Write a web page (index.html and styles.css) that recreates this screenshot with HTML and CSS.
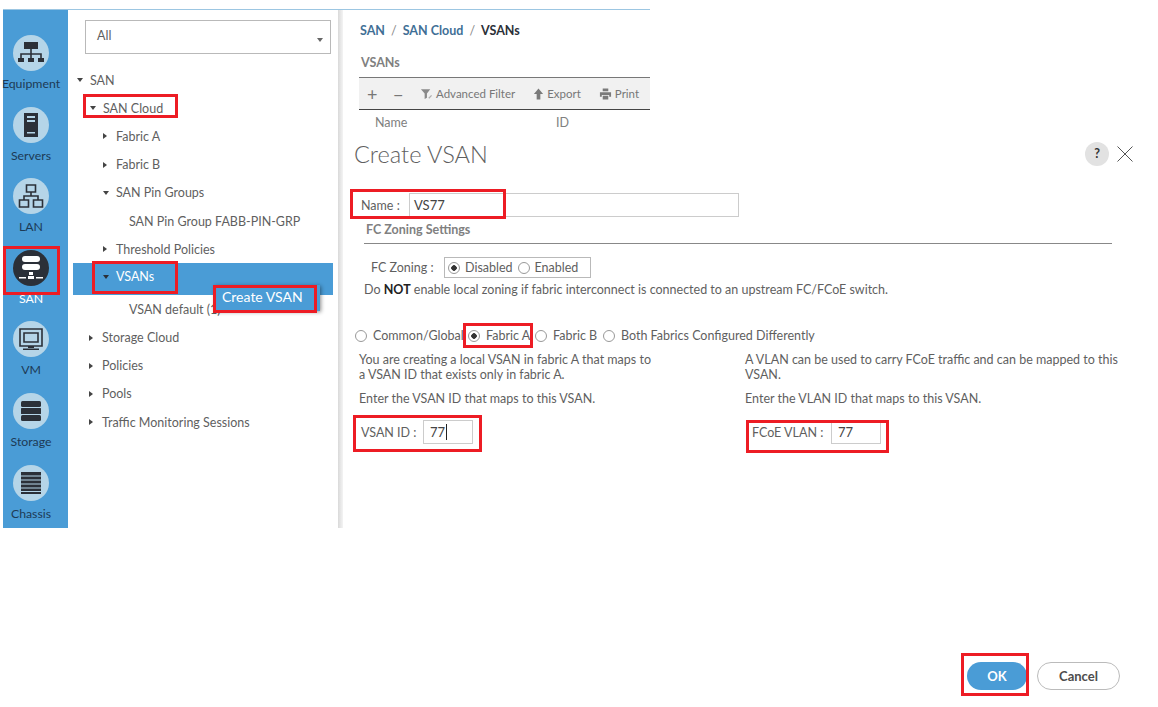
FILE: index.html
```html
<!DOCTYPE html>
<html lang="en">
<head>
    <meta charset="UTF-8">
    <title>Create VSAN</title>
    <link rel="stylesheet" href="styles.css">
</head>
<body>
<div class="page">
    <div class="topline"></div>
    <div class="app">

        <!-- Left icon nav -->
        <nav class="sidebar">
            <div class="nav-item">
                <div class="nav-icon">
                    <svg viewBox="0 0 36 36" width="36" height="36"><path d="M11 7h14v7H11z" fill="#2b3038"/><path d="M18 14v5M8 23v-4h20v4M18 19v4" stroke="#2b3038" stroke-width="1.6" fill="none"/><path d="M5 23h6v4H5zM15 23h6v4h-6zM25 23h6v4h-6z" fill="#2b3038"/></svg>
                </div>
                <span>Equipment</span>
            </div>
            <div class="nav-item">
                <div class="nav-icon">
                    <svg viewBox="0 0 36 36" width="36" height="36"><path d="M11 6h14v24H11z" fill="#2b3038"/><path d="M14 9h8v2h-8zM14 13h8v2h-8zM14 25h8v1.5h-8z" fill="#b5d5e8"/></svg>
                </div>
                <span>Servers</span>
            </div>
            <div class="nav-item">
                <div class="nav-icon">
                    <svg viewBox="0 0 36 36" width="36" height="36"><g fill="none" stroke="#2b3038" stroke-width="1.6"><path d="M13.5 7h9v7h-9zM6.500 22h9v7h-9zM20.500 22h9v7h-9z"/><path d="M18 14v4M11 22v-4h14v4"/></g></svg>
                </div>
                <span>LAN</span>
            </div>
            <div class="nav-item is-active">
                <div class="nav-icon">
                    <svg viewBox="0 0 36 36" width="36" height="36"><g fill="#fff"><rect x="9" y="6" width="18" height="6" rx="3"/><rect x="9" y="14" width="18" height="6" rx="3"/><path d="M16 22h4v3h-4zM15 26h6v3h-6zM6 27h7v1.500H6zM23 27h7v1.500h-7z"/></g></svg>
                </div>
                <span>SAN</span>
            </div>
            <div class="nav-item">
                <div class="nav-icon">
                    <svg viewBox="0 0 36 36" width="36" height="36"><path d="M7 8h22v17H7z" fill="none" stroke="#2b3038" stroke-width="1.600"/><path d="M11 12h14v9H11z" fill="none" stroke="#2b3038" stroke-width="1.600"/><path d="M15 25h6v2h-6zM10 27.500h16v1.500H10z" fill="#2b3038"/></svg>
                </div>
                <span>VM</span>
            </div>
            <div class="nav-item">
                <div class="nav-icon">
                    <svg viewBox="0 0 36 36" width="36" height="36"><g fill="#2b3038"><rect x="8" y="8" width="20" height="6" rx="1.500"/><rect x="8" y="15" width="20" height="6" rx="0.500"/><rect x="8" y="22" width="20" height="6" rx="1.500"/></g></svg>
                </div>
                <span>Storage</span>
            </div>
            <div class="nav-item">
                <div class="nav-icon">
                    <svg viewBox="0 0 36 36" width="36" height="36"><path d="M8 7h20v22H8z" fill="#2b3038"/><path d="M8 11h20M8 15h20M8 19h20M8 23h20M8 26.500h20" stroke="#b5d5e8" stroke-width="1"/></svg>
                </div>
                <span>Chassis</span>
            </div>
        </nav>

        <!-- Tree panel -->
        <section class="tree-panel">
            <div class="filter-select">
                <span>All</span>
                <i class="caret"></i>
            </div>
            <ul class="tree">
                <li class="row depth-0"><i class="arrow-down"></i>SAN</li>
                <li class="row depth-1"><i class="arrow-down"></i>SAN Cloud</li>
                <li class="row depth-2"><i class="arrow-right"></i>Fabric A</li>
                <li class="row depth-2"><i class="arrow-right"></i>Fabric B</li>
                <li class="row depth-2"><i class="arrow-down"></i>SAN Pin Groups</li>
                <li class="row depth-3">SAN Pin Group FABB-PIN-GRP</li>
                <li class="row depth-2"><i class="arrow-right"></i>Threshold Policies</li>
                <li class="row depth-2 selected"><i class="arrow-down"></i>VSANs</li>
                <li class="row depth-3">VSAN default (1)</li>
                <li class="row depth-top"><i class="arrow-right"></i>Storage Cloud</li>
                <li class="row depth-top"><i class="arrow-right"></i>Policies</li>
                <li class="row depth-top"><i class="arrow-right"></i>Pools</li>
                <li class="row depth-top"><i class="arrow-right"></i>Traffic Monitoring Sessions</li>
            </ul>
        </section>

        <div class="shade"></div>

        <main class="main">
            <!-- Page behind the dialog -->
            <div class="behind">
                <div class="breadcrumb">
                    <span>SAN</span><b>/</b><span>SAN Cloud</span><b>/</b><strong>VSANs</strong>
                </div>
                <h3 class="behind-title">VSANs</h3>
                <div class="toolbar">
                    <span class="tool-sign">+</span>
                    <span class="tool-sign minus">&minus;</span>
                    <span class="tool">
                        <svg viewBox="0 0 14 14" width="13" height="14"><path d="M1 2h10L7.500 6.500V11L5 12.500v-6z" fill="#8a8a8a"/><path d="M9 11l3-3 1 1-3 3z" fill="#b0b0b0"/></svg>
                        Advanced Filter
                    </span>
                    <span class="tool">
                        <svg viewBox="0 0 12 14" width="11" height="14"><path d="M6 1l5 6H8v6H4V7H1z" fill="#7a7a7a"/></svg>
                        Export
                    </span>
                    <span class="tool">
                        <svg viewBox="0 0 14 14" width="13" height="14"><path d="M4 1h6v3H4zM1 5h12v5h-2V8H3v2H1zM4 9h6v4H4z" fill="#7a7a7a"/></svg>
                        Print
                    </span>
                </div>
                <div class="table-head">
                    <span class="col-name">Name</span>
                    <span>ID</span>
                </div>
            </div>

            <!-- Create VSAN dialog -->
            <div class="dialog">
                <div class="dialog-head">
                    <h1>Create VSAN</h1>
                    <div class="dialog-actions">
                        <span class="help">?</span>
                        <svg viewBox="0 0 16 16" width="16" height="16"><path d="M0.500 0.500l15 15M15.500 0.500l-15 15" stroke="#555" stroke-width="1" fill="none"/></svg>
                    </div>
                </div>

                <div class="name-row">
                    <label>Name :</label>
                    <div class="text-input name-input">VS77</div>
                </div>

                <div class="settings">
                    <h3>FC Zoning Settings</h3>
                    <div class="zoning-row">
                        <label>FC Zoning :</label>
                        <div class="radio-box">
                            <span class="radio on"></span>Disabled
                            <span class="radio"></span>Enabled
                        </div>
                    </div>
                    <p class="note">Do <strong>NOT</strong> enable local zoning if fabric interconnect is connected to an upstream FC/FCoE switch.</p>
                </div>

                <div class="radio-row">
                    <span class="radio-opt"><span class="radio"></span>Common/Global</span>
                    <span class="radio-opt"><span class="radio on"></span>Fabric A</span>
                    <span class="radio-opt"><span class="radio"></span>Fabric B</span>
                    <span class="radio-opt"><span class="radio"></span>Both Fabrics Configured Differently</span>
                </div>

                <div class="columns">
                    <div class="column">
                        <p class="lead">You are creating a local VSAN in fabric A that maps to<br>a VSAN ID that exists only in fabric A.</p>
                        <p class="enter">Enter the VSAN ID that maps to this VSAN.</p>
                        <div class="id-row">
                            <label>VSAN ID :</label>
                            <div class="text-input id-input">77<i class="cursor"></i></div>
                        </div>
                    </div>
                    <div class="column right">
                        <p class="lead">A VLAN can be used to carry FCoE traffic and can be mapped to this VSAN.</p>
                        <p class="enter">Enter the VLAN ID that maps to this VSAN.</p>
                        <div class="id-row">
                            <label>FCoE VLAN :</label>
                            <div class="text-input id-input">77</div>
                        </div>
                    </div>
                </div>

                <div class="dialog-foot">
                    <button class="btn btn-ok">OK</button>
                    <button class="btn btn-cancel">Cancel</button>
                </div>
            </div>
        </main>
    </div>

    <!-- Context menu over the tree -->
    <div class="context-menu">Create VSAN</div>

    <!-- Red annotation boxes drawn over the screenshot -->
    <div class="mark mark-cloud"></div>
    <div class="mark mark-san"></div>
    <div class="mark mark-vsans"></div>
    <div class="mark mark-create"></div>
    <div class="mark mark-name"></div>
    <div class="mark mark-fabric"></div>
    <div class="mark mark-id"></div>
    <div class="mark mark-fcoe"></div>
    <div class="mark mark-ok"></div>
</div>
</body>
</html>
```

FILE: styles.css
```css
* {
    box-sizing: border-box;
}

body {
    margin: 0;
    background: #fff;
    color: #5f5f5f;
    font-family: Lato, 'Liberation Sans', sans-serif;
    font-size: 12.5px;
}

h1, h3, p, ul {
    margin: 0;
    padding: 0;
}

.page {
    position: relative;
    width: 1158px;
    height: 707px;
    overflow: hidden;
}

.topline {
    width: 647px;
    height: 1px;
    margin: 9px 0 0 3px;
    background: #9cc6e2;
}

.app {
    display: flex;
    align-items: flex-start;
    margin-left: 3px;
    height: 697px;
}

/* Sidebar */
.sidebar {
    flex: none;
    width: 65px;
    height: 518px;
    padding: 25px 9px 0 0;
    background: #4a9cd6;
}

.nav-item {
    display: flex;
    flex-direction: column;
    align-items: center;
    height: 71.6px;
    color: #1d3a55;
}

.nav-item span {
    margin-top: 4px;
    font-size: 12.3px;
    line-height: 17px;
    white-space: nowrap;
}

.nav-icon {
    flex: none;
    width: 36px;
    height: 36px;
    border-radius: 50%;
    background: #b5d5e8;
}

.nav-item.is-active {
    color: #fff;
}

.nav-item.is-active .nav-icon {
    background: #2b3038;
}

/* Tree */
.tree-panel {
    flex: none;
    width: 270px;
    height: 518px;
    padding: 10px 0 0 5px;
}

.filter-select {
    position: relative;
    width: 246px;
    height: 34px;
    margin-left: 12px;
    padding: 7px 11px;
    border: 1px solid #b9b9b9;
    line-height: 16px;
}

.caret {
    position: absolute;
    right: 7px;
    top: 17px;
    border-left: 3.500px solid transparent;
    border-right: 3.500px solid transparent;
    border-top: 4px solid #666;
}

.tree {
    list-style: none;
    width: 260px;
    margin-top: 12px;
}

.row {
    display: flex;
    align-items: center;
    height: 28.2px;
    white-space: nowrap;
}

.depth-0 { padding-left: 4px; }
.depth-top { padding-left: 16px; }
.depth-1 { padding-left: 17px; }
.depth-2 { padding-left: 30px; }
.depth-3 { padding-left: 56px; }

.row i {
    flex: none;
    width: 13px;
}

.arrow-down::before {
    content: "";
    display: block;
    width: 0;
    border-left: 3.500px solid transparent;
    border-right: 3.500px solid transparent;
    border-top: 4px solid #444;
}

.arrow-right::before {
    content: "";
    display: block;
    width: 0;
    border-top: 3.500px solid transparent;
    border-bottom: 3.500px solid transparent;
    border-left: 4px solid #444;
}

.row.selected {
    align-items: flex-start;
    height: 32px;
    padding-top: 1px;
    background: #4a9cd6;
    color: #fff;
    line-height: 26px;
}

.row.selected i {
    padding-top: 11px;
}

.row.selected .arrow-down::before {
    border-top-color: #2b3038;
}

.shade {
    flex: none;
    width: 5px;
    height: 518px;
    background: linear-gradient(90deg, #d9d9d9, #f4f4f4);
}

/* Main area */
.main {
    flex: 1;
    min-width: 0;
}

.behind {
    width: 307px;
    height: 124px;
    padding: 13px 0 0 16px;
}

.breadcrumb {
    display: flex;
    gap: 6px;
    padding-left: 1px;
    line-height: 16px;
    font-weight: 700;
    color: #3f6f96;
}

.breadcrumb b {
    font-weight: 400;
    color: #888;
}

.breadcrumb strong {
    color: #2b3038;
    font-weight: 700;
}

.behind-title {
    margin-top: 16px;
    padding-left: 2px;
    line-height: 16px;
    font-size: 12.5px;
    font-weight: 700;
    color: #808080;
}

.toolbar {
    display: flex;
    align-items: center;
    height: 33px;
    margin-top: 6px;
    padding-left: 8px;
    border-top: 1px solid #777;
    border-bottom: 1px solid #444;
    background: #f1f1f1;
    color: #777;
    font-size: 11.5px;
    white-space: nowrap;
}

.tool-sign {
    flex: none;
    width: 26px;
    font-size: 18px;
    line-height: 20px;
}

.tool-sign.minus {
    width: 27px;
}

.tool {
    flex: none;
    display: flex;
    align-items: center;
    gap: 3px;
    margin-right: 18px;
}

.tool:last-child {
    margin-right: 0;
}

.table-head {
    display: flex;
    padding: 5px 0 0 16px;
    color: #808080;
    line-height: 16px;
}

.col-name {
    width: 181px;
}

/* Dialog */
.dialog {
    height: 563px;
    padding-left: 11px;
    background: #fff;
}

.dialog-head {
    display: flex;
    align-items: center;
    justify-content: space-between;
    width: 779px;
    height: 40px;
}

.dialog-head h1 {
    font-size: 23.6px;
    font-weight: 300;
    color: #5f5f5f;
}

.dialog-actions {
    display: flex;
    align-items: center;
    gap: 8px;
}

.help {
    width: 24px;
    height: 24px;
    border-radius: 50%;
    background: #e2e2e2;
    color: #333;
    font-weight: 700;
    line-height: 24px;
    text-align: center;
}

.name-row {
    display: flex;
    align-items: center;
    margin-top: 19px;
    padding-left: 7px;
}

.name-row label {
    width: 48px;
}

.text-input {
    border: 1px solid #ccc;
    height: 24px;
    padding-left: 4px;
    line-height: 22px;
    font-size: 13px;
    color: #444;
}

.name-input {
    width: 330px;
}

.settings {
    width: 748px;
    margin-left: 10px;
}

.settings h3 {
    margin-top: 5px;
    padding: 0 2px 5px;
    border-bottom: 1px solid #888;
    font-size: 12.5px;
    font-weight: 700;
    line-height: 16px;
    color: #808080;
}

.zoning-row {
    display: flex;
    align-items: center;
    margin-top: 13px;
    padding-left: 7px;
}

.zoning-row label {
    width: 73px;
}

.radio-box {
    display: flex;
    align-items: center;
    width: 147px;
    height: 21px;
    padding-left: 3px;
    border: 1px solid #b9b9b9;
}

.radio {
    flex: none;
    width: 12px;
    height: 12px;
    border: 1px solid #999;
    border-radius: 50%;
    margin-right: 5px;
    background: #fff;
}

.radio-box .radio + .radio,
.radio-box .radio:last-of-type {
    margin-left: 5px;
}

.radio.on {
    background: radial-gradient(circle, #333 0, #333 2.500px, #fff 3px);
}

.note {
    margin-top: 4px;
    line-height: 16px;
}

.note strong {
    color: #222;
}

.radio-row {
    display: grid;
    grid-template-columns: 113px 67px 68px auto;
    margin-top: 30px;
    padding-left: 1px;
    line-height: 16px;
    white-space: nowrap;
}

.radio-opt {
    display: flex;
    align-items: center;
}

.radio-opt .radio {
    margin-right: 6px;
}

.columns {
    display: flex;
    margin-top: 8px;
}

.column {
    width: 391px;
    padding-left: 5px;
}

.column.right {
    width: 385px;
    padding-left: 0;
}

.lead {
    height: 30px;
    line-height: 15px;
}

.enter {
    margin-top: 9px;
    line-height: 15px;
}

.id-row {
    display: flex;
    align-items: center;
    margin-top: 14px;
    padding-left: 2px;
}

.id-row label {
    width: 62px;
}

.right .id-row {
    padding-left: 7px;
}

.right .id-row label {
    width: 79px;
}

.id-input {
    width: 50px;
    padding-left: 6px;
}

.cursor {
    display: inline-block;
    width: 1px;
    height: 16px;
    margin-left: 1px;
    background: #222;
    vertical-align: -3px;
}

.dialog-foot {
    display: flex;
    justify-content: flex-end;
    gap: 10px;
    margin-top: 218px;
    margin-right: 38px;
}

.btn {
    height: 28px;
    border-radius: 14px;
    font-family: inherit;
    font-size: 13px;
    font-weight: 700;
    padding: 0;
}

.btn-ok {
    width: 60px;
    border: none;
    background: #4a9cd6;
    color: #fff;
}

.btn-cancel {
    width: 83px;
    border: 1px solid #bbb;
    background: #fff;
    color: #4d4d4d;
}

/* Right click menu */
.context-menu {
    position: absolute;
    left: 214px;
    top: 285px;
    width: 106px;
    height: 26px;
    padding-left: 8px;
    background: #4a9cd6;
    box-shadow: 1px 1px 4px rgba(0, 0, 0, 0.45);
    color: #fff;
    font-size: 14px;
    line-height: 23px;
}

/* Red annotation boxes */
.mark {
    position: absolute;
    border: 3px solid #ed1c24;
}

.mark-cloud { left: 83px; top: 94px; width: 95px; height: 24px; }
.mark-san { left: 3px; top: 246px; width: 57px; height: 49px; }
.mark-vsans { left: 92px; top: 261px; width: 86px; height: 33px; }
.mark-create { left: 213px; top: 285px; width: 104px; height: 28px; }
.mark-name { left: 350px; top: 189px; width: 156px; height: 30px; }
.mark-fabric { left: 463px; top: 323px; width: 70px; height: 25px; }
.mark-id { left: 353px; top: 415px; width: 129px; height: 37px; }
.mark-fcoe { left: 746px; top: 420px; width: 143px; height: 33px; }
.mark-ok { left: 961px; top: 653px; width: 68px; height: 43px; }
```
